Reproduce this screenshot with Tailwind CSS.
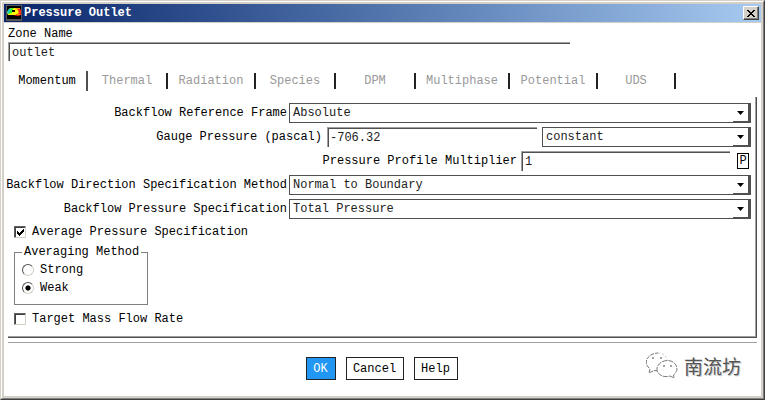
<!DOCTYPE html>
<html lang="en">
<head>
<meta charset="utf-8">
<meta name="viewport" content="width=device-width, initial-scale=1">
<title>Pressure Outlet</title>
<script src="https://cdn.jsdelivr.net/npm/@tailwindcss/browser@4"></script>
</head>
<body class="min-h-screen bg-white font-['Liberation_Mono','Noto_Sans_CJK_SC',monospace] text-[12px] leading-[18px] text-black">
<div class="flex min-h-screen flex-col border border-t-[#d4d0c8] border-l-[#d4d0c8] border-r-[#404040] border-b-[#404040]">
<div class="flex flex-1 flex-col border border-t-white border-l-white border-r-[#808080] border-b-[#808080]">
<main class="relative flex flex-1 flex-col border-2 border-[#d4d0c8] bg-white">

  <header class="flex h-[19px] items-center justify-between border-b border-[#d4d0c8] bg-linear-to-r from-[#0a246a] to-[#a6caf0] px-[2px]">
    <h1 class="flex items-center gap-[2px] font-bold text-white">
      <svg class="h-4 w-4" viewBox="0 0 16 16" aria-hidden="true">
        <rect width="16" height="16" fill="#555"/><rect x="1" y="1" width="14" height="13" fill="#000"/>
        <path d="M1 7 3 4 6 3H13L15 5V10L12 11 7 10 2 10Z" fill="#f22"/>
        <path d="M1 7 4 3H9L12 5 13 8 9 10 2 10Z" fill="#ff0"/>
        <path d="M1 8 3 4 6 3H8L6 5V8L3 9Z" fill="#3e3"/>
        <path d="M1 7 3 4 5 3 4 6 2 9Z" fill="#1cc"/>
        <path d="M6 5H9V7H6Z" fill="#111"/>
        <path d="M10 3H14V4H10ZM11 9H14V10H11Z" fill="#f90"/>
      </svg>
      Pressure Outlet
    </h1>
    <button type="button" aria-label="Close" class="flex h-[14px] w-4 items-center justify-center border border-t-white border-l-white border-r-[#404040] border-b-[#404040] bg-[#d4d0c8] shadow-[inset_-1px_-1px_0_#808080]">
      <svg class="h-[7px] w-2" viewBox="0 0 8 7" shape-rendering="crispEdges" aria-hidden="true"><path d="M0 0h2v1h1v1h2V1h1V0h2v1H7v1H6v1H5v1h1v1h1v1h1v1H6V6H5V5H3v1H2v1H0V6h1V5h1V4h1V3H2V2H1V1H0z"/></svg>
    </button>
  </header>

  <form class="flex flex-1 flex-col px-1 pt-[2px]">
    <label for="zone" class="h-[17px]">Zone Name</label>
    <div class="w-3/4 border-t border-l border-[#a0a0a0]">
      <input id="zone" value="outlet" class="block h-[18px] w-full border-t border-l border-[#505050] px-[2px] text-[#222] outline-none">
    </div>

    <div role="tablist" class="mt-[10px] flex h-5 items-center text-[#999]">
      <button type="button" role="tab" aria-selected="true" class="h-5 w-20 border-r-2 border-[#505050] text-black">Momentum</button>
      <button type="button" role="tab" class="h-4 w-20 border-r-2 border-[#222] leading-4">Thermal</button>
      <button type="button" role="tab" class="h-4 w-[88px] border-r-2 border-[#222] leading-4">Radiation</button>
      <button type="button" role="tab" class="h-4 w-20 border-r-2 border-[#222] leading-4">Species</button>
      <button type="button" role="tab" class="h-4 w-20 border-r-2 border-[#222] leading-4">DPM</button>
      <button type="button" role="tab" class="h-4 w-[94px] border-r-2 border-[#222] leading-4">Multiphase</button>
      <button type="button" role="tab" class="h-4 w-[88px] border-r-2 border-[#222] leading-4">Potential</button>
      <button type="button" role="tab" class="h-4 w-[78px] border-r-2 border-[#222] leading-4">UDS</button>
    </div>

    <section class="mt-[6px] border-r border-b border-[#505050]">
    <div class="border-r border-b border-[#a0a0a0] pt-[6px] pr-1 pb-2 pl-[6px]">
      <div class="grid gap-1">
        <div class="flex items-center">
          <label for="frame" class="w-[275px] shrink-0 text-right whitespace-nowrap pr-[2px]">Backflow Reference Frame</label>
          <div class="relative flex-1">
            <select id="frame" class="block h-5 w-full appearance-none border border-r-2 border-[#505050] bg-white px-[3px] text-[#222]"><option>Absolute</option></select>
            <span class="pointer-events-none absolute top-[1px] right-[2px] flex h-[18px] w-4 items-center justify-center border-r border-b border-[#505050]"><svg class="h-1 w-[7px]" viewBox="0 0 7 4" aria-hidden="true"><path d="M0 0h7L3.5 4z"/></svg></span>
          </div>
        </div>
        <div class="flex items-center">
          <label for="gauge" class="w-[313px] shrink-0 pr-[5px] text-right whitespace-nowrap">Gauge Pressure (pascal)</label>
          <div class="flex-1 border-t border-l border-[#a0a0a0]"><input id="gauge" value="-706.32" class="block h-[19px] w-full border-t border-l border-[#505050] px-[1px] text-[#222] outline-none"></div>
          <div class="relative ml-[5px] flex-1">
            <select id="profile" aria-label="Gauge pressure profile" class="block h-5 w-full appearance-none border border-r-2 border-[#505050] bg-white px-[3px] text-[#222]"><option>constant</option></select>
            <span class="pointer-events-none absolute top-[1px] right-[2px] flex h-[18px] w-4 items-center justify-center border-r border-b border-[#505050]"><svg class="h-1 w-[7px]" viewBox="0 0 7 4" aria-hidden="true"><path d="M0 0h7L3.5 4z"/></svg></span>
          </div>
        </div>
        <div class="flex items-center">
          <label for="mult" class="w-[507px] shrink-0 pr-[4px] text-right whitespace-nowrap">Pressure Profile Multiplier</label>
          <div class="flex-1 border-t border-l border-[#a0a0a0]"><input id="mult" value="1" class="block h-[19px] w-full border-t border-l border-[#505050] px-[2px] text-[#222] outline-none"></div>
          <button type="button" class="mr-[2px] ml-[7px] h-4 w-3 border border-black text-[12px] leading-[14px]">P</button>
        </div>
        <div class="flex items-center">
          <label for="direction" class="flex w-[275px] shrink-0 justify-end pr-[2px] whitespace-nowrap">Backflow Direction Specification Method</label>
          <div class="relative flex-1">
            <select id="direction" class="block h-5 w-full appearance-none border border-r-2 border-[#505050] bg-white px-[3px] text-[#222]"><option>Normal to Boundary</option></select>
            <span class="pointer-events-none absolute top-[1px] right-[2px] flex h-[18px] w-4 items-center justify-center border-r border-b border-[#505050]"><svg class="h-1 w-[7px]" viewBox="0 0 7 4" aria-hidden="true"><path d="M0 0h7L3.5 4z"/></svg></span>
          </div>
        </div>
        <div class="flex items-center">
          <label for="pressure" class="w-[275px] shrink-0 pr-[2px] text-right whitespace-nowrap">Backflow Pressure Specification</label>
          <div class="relative flex-1">
            <select id="pressure" class="block h-5 w-full appearance-none border border-r-2 border-[#505050] bg-white px-[3px] text-[#222]"><option>Total Pressure</option></select>
            <span class="pointer-events-none absolute top-[1px] right-[2px] flex h-[18px] w-4 items-center justify-center border-r border-b border-[#505050]"><svg class="h-1 w-[7px]" viewBox="0 0 7 4" aria-hidden="true"><path d="M0 0h7L3.5 4z"/></svg></span>
          </div>
        </div>
      </div>

      <label class="mt-1 flex items-center gap-[6px]">
        <span class="grid h-3 w-3">
          <input type="checkbox" checked class="peer col-start-1 row-start-1 h-3 w-3 appearance-none border border-t-[#606060] border-l-[#606060] border-r-[#d4d0c8] border-b-[#d4d0c8] shadow-[inset_1px_1px_0_#404040]">
          <svg class="pointer-events-none invisible col-start-1 row-start-1 h-3 w-3 peer-checked:visible" viewBox="0 0 12 12" shape-rendering="crispEdges" aria-hidden="true"><path d="M3 5h1v1h1v1h1V6h1V5h1V4h1V3h1v3H9v1H8v1H7v1H6v1H5V9H4V8H3z"/></svg>
        </span>
        Average Pressure Specification
      </label>

      <fieldset class="mt-[2px] w-[134px] border border-[#808080] px-[6px] pb-[7px]">
        <legend class="ml-[1px] px-[2px] whitespace-nowrap">Averaging Method</legend>
        <label class="flex items-center gap-[6px] pl-[1px]"><input type="radio" name="avg" class="h-3 w-3 appearance-none rounded-full border border-t-[#505050] border-l-[#505050] border-r-[#d4d0c8] border-b-[#d4d0c8] bg-white checked:bg-radial checked:from-black checked:from-[2px] checked:to-white checked:to-[3px]">Strong</label>
        <label class="flex items-center gap-[6px] pl-[1px]"><input type="radio" name="avg" checked class="h-3 w-3 appearance-none rounded-full border border-t-[#505050] border-l-[#505050] border-r-[#d4d0c8] border-b-[#d4d0c8] bg-white checked:bg-radial checked:from-black checked:from-[2px] checked:to-white checked:to-[3px]">Weak</label>
      </fieldset>

      <label class="mt-[5px] flex items-center gap-[6px]">
        <span class="grid h-3 w-3">
          <input type="checkbox" class="peer col-start-1 row-start-1 h-3 w-3 appearance-none border border-t-[#606060] border-l-[#606060] border-r-[#d4d0c8] border-b-[#d4d0c8] shadow-[inset_1px_1px_0_#404040]">
          <svg class="pointer-events-none invisible col-start-1 row-start-1 h-3 w-3 peer-checked:visible" viewBox="0 0 12 12" shape-rendering="crispEdges" aria-hidden="true"><path d="M3 5h1v1h1v1h1V6h1V5h1V4h1V3h1v3H9v1H8v1H7v1H6v1H5V9H4V8H3z"/></svg>
        </span>
        Target Mass Flow Rate
      </label>
    </div>
    </section>

    <footer class="mt-1 flex justify-center gap-[10px] border-t border-[#a0a0a0] pt-[14px] pr-[2px]">
      <button type="button" class="h-[23px] w-[30px] border border-[#222] bg-[#2196f3] text-white">OK</button>
      <button type="button" class="h-[23px] w-[58px] border border-[#222]">Cancel</button>
      <button type="button" class="h-[23px] w-11 border border-[#222]">Help</button>
    </footer>
  </form>

  <div class="absolute right-[20px] bottom-4 flex items-center gap-[6px]">
    <svg class="h-7 w-8" viewBox="0 0 32 28" fill="#fff" stroke="#777" stroke-width="1" aria-hidden="true">
      <path d="M12 19 8 18.500 3 21 4 17C-5 9 4 1 12 1" stroke-dasharray="4 1"/>
      <path d="M12 1C18 1 21 5 21 9" stroke="#ccc" stroke-dasharray="2 2"/>
      <path d="M21 8.500C15 9 11 13 11 17 11 23 18 26 24 24L28 26 27.500 23C35 17 29 8 21 8.500" stroke-dasharray="5 1"/>
      <path d="M6 6h2M14 6h2M17 14h2M24 14h2" stroke="#444"/>
    </svg>
    <span class="font-['Noto_Sans_CJK_SC',sans-serif] text-[19px] leading-7 text-[#555] [text-shadow:1px_1px_0_#ccc]" lang="zh">南流坊</span>
  </div>
</main>
</div>
</div>
</body>
</html>
